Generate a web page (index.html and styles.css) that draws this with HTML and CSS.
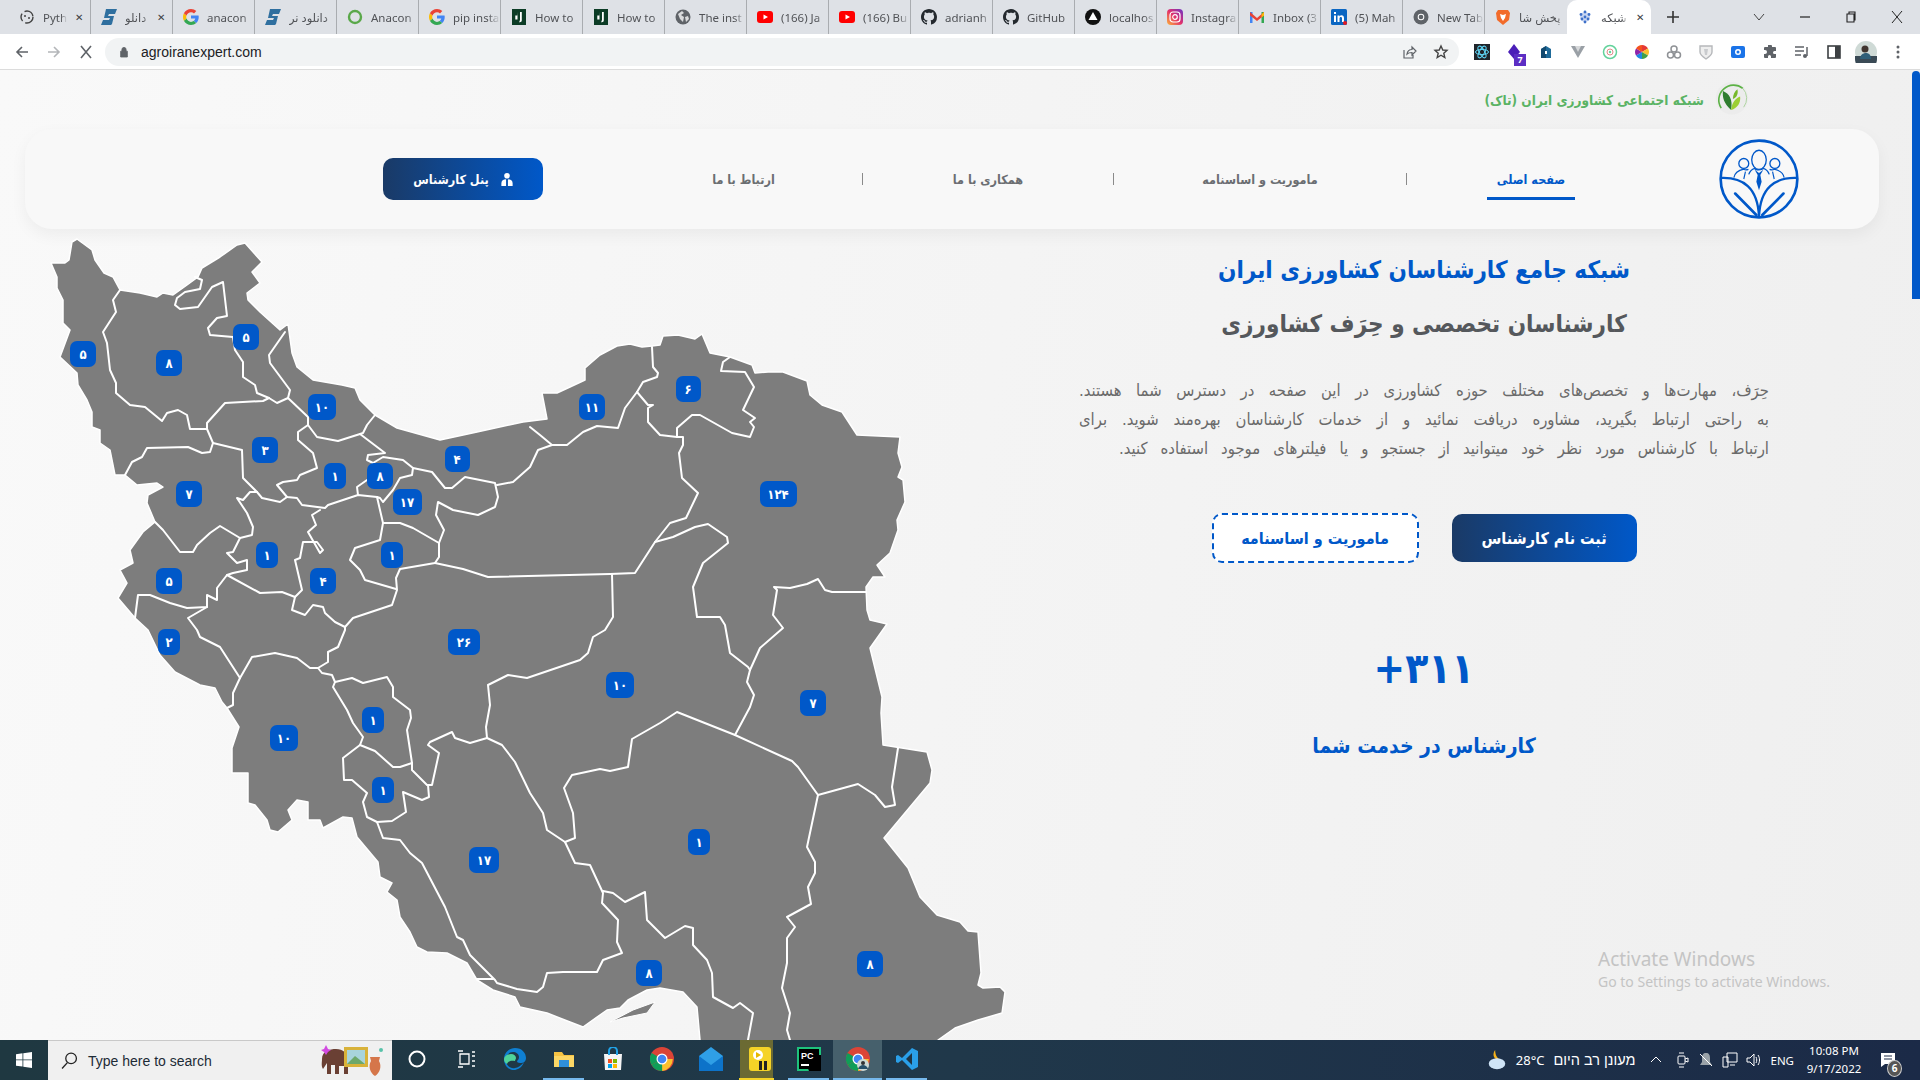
FILE: index.html
```html
<!DOCTYPE html>
<html lang="fa">
<head>
<meta charset="utf-8">
<title>agroiranexpert.com</title>
<link rel="stylesheet" href="styles.css">
</head>
<body>
<svg class="defs" width="0" height="0" aria-hidden="true">
  <symbol id="i-py" viewBox="0 0 16 16"><circle cx="8" cy="8" r="6" fill="none" stroke="#444" stroke-width="1.4" stroke-dasharray="11 3 8 3"/><circle cx="6" cy="7" r="1" fill="#444"/><circle cx="10" cy="9" r="1" fill="#444"/></symbol>
  <symbol id="i-s" viewBox="0 0 16 16"><path d="M5 0h11l-2 5H8L7 7h6l-2 8-1 1H0l2-5h6l1-2H3z" fill="#2f6f9f"/></symbol>
  <symbol id="i-g" viewBox="0 0 16 16"><path d="M15.7 8.2c0-.6 0-1.100-.2-1.600H8v3h4.300c-.2 1-.7 1.800-1.600 2.400l2.500 2c1.500-1.400 2.500-3.400 2.500-5.800z" fill="#4285f4"/><path d="M8 16c2.100 0 3.900-.7 5.200-1.900l-2.500-2c-.7.5-1.600.8-2.700.8-2.100 0-3.800-1.400-4.500-3.300L.9 11.700C2.200 14.300 4.900 16 8 16z" fill="#34a853"/><path d="M3.500 9.600C3.300 9.100 3.200 8.600 3.200 8s.1-1.100.3-1.600L.9 4.300C.3 5.400 0 6.700 0 8s.3 2.600.9 3.700z" fill="#fbbc05"/><path d="M8 3.200c1.200 0 2.200.4 3 1.200l2.300-2.300C11.900.8 10.100 0 8 0 4.900 0 2.200 1.700.9 4.300l2.600 2.100C4.200 4.500 5.900 3.200 8 3.200z" fill="#ea4335"/></symbol>
  <symbol id="i-o" viewBox="0 0 16 16"><circle cx="8" cy="8" r="6" fill="none" stroke="#5aa84a" stroke-width="2.400"/></symbol>
  <symbol id="i-dj" viewBox="0 0 16 16"><rect x="1" width="14" height="16" fill="#0c3c26"/><path d="M6.500 3v7.500H4.300V6.500h2zM9 3h1.800v8c0 1.500-.6 2-2.400 2.500v-1.500c.5-.2.600-.5.600-1z" fill="#fff"/></symbol>
  <symbol id="i-globe" viewBox="0 0 16 16"><circle cx="8" cy="8" r="7.500" fill="#5f6368"/><path d="M3 5l4-3 2 2-3 2 3 2-1 5-3-3zM10 8l3-1 1 3-3 3z" fill="#d9dadc"/></symbol>
  <symbol id="i-yt" viewBox="0 0 16 16"><rect y="2" width="16" height="12" rx="3" fill="#f00"/><path d="M6.500 5.500v5L11 8z" fill="#fff"/></symbol>
  <symbol id="i-gh" viewBox="0 0 16 16"><path fill="#24292e" d="M8 0C3.580 0 0 3.580 0 8c0 3.540 2.290 6.530 5.470 7.590.4.070.55-.17.55-.38 0-.19-.01-.82-.01-1.490-2.010.37-2.530-.49-2.690-.94-.09-.23-.48-.94-.82-1.130-.28-.15-.68-.52-.01-.53.63-.01 1.080.58 1.230.82.72 1.210 1.870.87 2.330.66.07-.52.28-.87.51-1.070-1.780-.2-3.640-.89-3.640-3.950 0-.87.31-1.590.82-2.150-.08-.2-.36-1.020.08-2.120 0 0 .67-.21 2.200.82.64-.18 1.320-.27 2-.27.68 0 1.360.09 2 .27 1.530-1.040 2.200-.82 2.200-.82.44 1.100.16 1.920.08 2.120.51.56.82 1.270.82 2.150 0 3.070-1.870 3.750-3.650 3.950.29.25.54.73.54 1.480 0 1.070-.01 1.930-.01 2.200 0 .21.15.46.55.38A8.013 8.013 0 0016 8c0-4.420-3.580-8-8-8z"/></symbol>
  <symbol id="i-lh" viewBox="0 0 16 16"><circle cx="8" cy="8" r="8" fill="#111"/><path d="M8 3l4.500 8h-9z" fill="#fff"/></symbol>
  <symbol id="i-ig" viewBox="0 0 16 16"><defs><linearGradient id="ig" x1="0" y1="1" x2="1" y2="0"><stop offset="0" stop-color="#fdb33a"/><stop offset=".5" stop-color="#e1306c"/><stop offset="1" stop-color="#6a35c9"/></linearGradient></defs><rect width="16" height="16" rx="4" fill="url(#ig)"/><rect x="3" y="3" width="10" height="10" rx="3" fill="none" stroke="#fff" stroke-width="1.200"/><circle cx="8" cy="8" r="2.300" fill="none" stroke="#fff" stroke-width="1.200"/></symbol>
  <symbol id="i-m" viewBox="0 0 16 16"><path d="M1 3h2.500v11H1z" fill="#4285f4"/><path d="M12.500 3H15v11h-2.500z" fill="#34a853"/><path d="M1 3l7 6 7-6v3.500L8 12 1 6.500z" fill="#ea4335"/><path d="M12.500 5.500L15 3v3.500l-2.500 2z" fill="#fbbc05"/></symbol>
  <symbol id="i-in" viewBox="0 0 16 16"><rect width="16" height="16" rx="1.500" fill="#0a66c2"/><path d="M3 6.500h2V13H3zM3 3h2v2H3zM6.500 6.500h2v1c.5-.8 1.200-1.200 2-1.200 1.700 0 2.500 1 2.500 2.900V13h-2V9.500c0-1-.4-1.500-1.200-1.500-.8 0-1.300.6-1.300 1.600V13h-2z" fill="#fff"/><circle cx="14" cy="14" r="2" fill="#e31b23"/></symbol>
  <symbol id="i-cg" viewBox="0 0 16 16"><circle cx="8" cy="8" r="7.500" fill="#5f6368"/><circle cx="8" cy="8" r="3.300" fill="#fff"/><circle cx="8" cy="8" r="2.300" fill="#5f6368"/></symbol>
  <symbol id="i-br" viewBox="0 0 16 16"><path d="M3 1h10l2 3-1 7-6 5-6-5-1-7z" fill="#f26b2a"/><path d="M5 5l3 1 3-1-1 4-2 3-2-3z" fill="#fff"/></symbol>
  <symbol id="i-net" viewBox="0 0 16 16"><circle cx="8" cy="8" r="5" fill="#c9d6f2"/><g fill="#3e70c9"><circle cx="8" cy="3" r="1.400"/><circle cx="4" cy="5.500" r="1.400"/><circle cx="12" cy="5.500" r="1.400"/><circle cx="5" cy="10" r="1.400"/><circle cx="11" cy="10" r="1.400"/><circle cx="8" cy="8" r="1.400"/><circle cx="8" cy="13" r="1.400"/></g></symbol>
  <symbol id="i-chrome" viewBox="0 0 24 24"><circle cx="12" cy="12" r="12" fill="#db4437"/><path d="M12 12L1.600 18A12 12 0 0 1 1.600 6z" fill="#0f9d58"/><path d="M1.600 18L12 12l6 0-5.800 12A12 12 0 0 1 1.600 18z" fill="#0f9d58"/><path d="M12 12h10.800a12 12 0 0 1-10.600 12z" fill="#fbc02d"/><circle cx="12" cy="12" r="5.500" fill="#fff"/><circle cx="12" cy="12" r="4.300" fill="#4285f4"/></symbol>
</svg>

<header class="chrome">
  <div class="tabs">
    <div class="tab"><svg class="fav"><use href="#i-py"/></svg><span class="tt">Pyth</span><span class="tx">✕</span></div>
    <div class="tab"><svg class="fav"><use href="#i-s"/></svg><span class="tt">دانلو</span><span class="tx">✕</span></div>
    <div class="tab"><svg class="fav"><use href="#i-g"/></svg><span class="tt">anacon</span></div>
    <div class="tab"><svg class="fav"><use href="#i-s"/></svg><span class="tt">دانلود نر</span></div>
    <div class="tab"><svg class="fav"><use href="#i-o"/></svg><span class="tt">Anacon</span></div>
    <div class="tab"><svg class="fav"><use href="#i-g"/></svg><span class="tt">pip insta</span></div>
    <div class="tab"><svg class="fav"><use href="#i-dj"/></svg><span class="tt">How to</span></div>
    <div class="tab"><svg class="fav"><use href="#i-dj"/></svg><span class="tt">How to</span></div>
    <div class="tab"><svg class="fav"><use href="#i-globe"/></svg><span class="tt">The inst</span></div>
    <div class="tab"><svg class="fav"><use href="#i-yt"/></svg><span class="tt">(166) Ja</span></div>
    <div class="tab"><svg class="fav"><use href="#i-yt"/></svg><span class="tt">(166) Bu</span></div>
    <div class="tab"><svg class="fav"><use href="#i-gh"/></svg><span class="tt">adrianh</span></div>
    <div class="tab"><svg class="fav"><use href="#i-gh"/></svg><span class="tt">GitHub</span></div>
    <div class="tab"><svg class="fav"><use href="#i-lh"/></svg><span class="tt">localhos</span></div>
    <div class="tab"><svg class="fav"><use href="#i-ig"/></svg><span class="tt">Instagra</span></div>
    <div class="tab"><svg class="fav"><use href="#i-m"/></svg><span class="tt">Inbox (3</span></div>
    <div class="tab"><svg class="fav"><use href="#i-in"/></svg><span class="tt">(5) Mah</span></div>
    <div class="tab"><svg class="fav"><use href="#i-cg"/></svg><span class="tt">New Tab</span></div>
    <div class="tab tab-last"><svg class="fav"><use href="#i-br"/></svg><span class="tt">پخش شا</span></div>
    <div class="tab tab-active"><svg class="fav"><use href="#i-net"/></svg><span class="tt">شبکه</span><span class="tx">✕</span></div>
    <svg class="newtab" viewBox="0 0 14 14"><path d="M7 1v12M1 7h12" stroke="#333" stroke-width="1.600"/></svg>
    <div class="winctl">
      <svg class="wc" viewBox="0 0 14 14"><path d="M2 4l5 6 5-6" fill="none" stroke="#444" stroke-width="1"/></svg>
      <svg class="wc" viewBox="0 0 14 14"><path d="M2 7h10" stroke="#222" stroke-width="1.200"/></svg>
      <svg class="wc" viewBox="0 0 14 14"><path d="M3 4h7v8H3zM5 4V2h6v8h-1" fill="none" stroke="#222" stroke-width="1.100"/></svg>
      <svg class="wc" viewBox="0 0 14 14"><path d="M2 1l10 12M12 1L2 13" fill="none" stroke="#222" stroke-width="1"/></svg>
    </div>
  </div>
  <div class="toolbar">
    <svg class="tb" viewBox="0 0 16 16"><path d="M14 8H3M8 3L3 8l5 5" fill="none" stroke="#5f6368" stroke-width="1.600"/></svg>
    <svg class="tb" viewBox="0 0 16 16"><path d="M2 8h11M8 3l5 5-5 5" fill="none" stroke="#b4b6b9" stroke-width="1.600"/></svg>
    <svg class="tb" viewBox="0 0 16 16"><path d="M3 2l10 12M13 2L3 14" fill="none" stroke="#5f6368" stroke-width="1.600"/></svg>
    <div class="omni">
      <svg class="lock" viewBox="0 0 12 14"><path d="M2 6h8v7H2zM3.500 6V4a2.500 2.500 0 0 1 5 0v2" fill="#5f6368" stroke="#5f6368"/></svg>
      <span class="url">agroiranexpert.com</span>
      <svg class="omni-ic" viewBox="0 0 16 16"><path d="M3 6v8h9v-3M6 10c.5-3 3-4.500 5-4.500V3l4 4-4 4V8.500c-2 0-4 .5-5 1.500z" fill="none" stroke="#5f6368" stroke-width="1.200"/></svg>
      <svg class="omni-ic" viewBox="0 0 16 16"><path d="M8 2l1.800 4 4.200.4-3.200 2.800 1 4.300L8 11.200l-3.800 2.300 1-4.300L2 6.400 6.200 6z" fill="none" stroke="#444" stroke-width="1.400"/></svg>
    </div>
    <div class="exts">
      <svg class="ex" viewBox="0 0 16 16"><rect width="16" height="16" fill="#20252b"/><g fill="none" stroke="#61dafb"><ellipse cx="8" cy="8" rx="6.500" ry="2.600"/><ellipse cx="8" cy="8" rx="6.500" ry="2.600" transform="rotate(60 8 8)"/><ellipse cx="8" cy="8" rx="6.500" ry="2.600" transform="rotate(120 8 8)"/></g></svg>
      <div class="ex ex-badge"><svg class="ex" viewBox="0 0 16 16"><path d="M8 0l6 8-6 7-6-7z" fill="#4a1fb8"/></svg><span class="bdg">7</span></div>
      <svg class="ex" viewBox="0 0 16 16"><path d="M3 5l5-3 5 3v9H3z" fill="#1f6a99"/><path d="M3 5l5-3v12H3z" fill="#134a70"/><rect x="7" y="7" width="2" height="3" fill="#fff"/></svg>
      <svg class="ex" viewBox="0 0 16 16"><path d="M1 2h14L8 14z" fill="#9aa0a6"/><path d="M5 2h6L8 8z" fill="#d6d8da"/></svg>
      <svg class="ex" viewBox="0 0 16 16"><circle cx="8" cy="8" r="6.500" fill="none" stroke="#63d29b" stroke-width="1.500"/><circle cx="8" cy="8" r="3" fill="none" stroke="#e28a8a"/><circle cx="8" cy="8" r="1.200" fill="#63d29b"/></svg>
      <svg class="ex" viewBox="0 0 16 16"><path d="M8 8V1a7 7 0 0 1 6 3.500z" fill="#e53935"/><path d="M8 8l6-3.500A7 7 0 0 1 14 11.500z" fill="#fbc02d"/><path d="M8 8l6 3.500A7 7 0 0 1 8 15z" fill="#43a047"/><path d="M8 8v7a7 7 0 0 1-6-3.500z" fill="#1e88e5"/><path d="M8 8L2 11.500a7 7 0 0 1 0-7z" fill="#8e24aa"/><path d="M8 8L2 4.500A7 7 0 0 1 8 1z" fill="#f4511e"/></svg>
      <svg class="ex" viewBox="0 0 16 16"><g fill="none" stroke="#8f9296" stroke-width="1.500"><circle cx="8" cy="5" r="3"/><circle cx="4.500" cy="11" r="3"/><circle cx="11.500" cy="11" r="3"/></g></svg>
      <svg class="ex" viewBox="0 0 16 16"><path d="M2 2h12v6c0 3-3 5-6 7-3-2-6-4-6-7z" fill="#eee" stroke="#b6b8bb" stroke-width="1.400"/><path d="M6 5h4l-1 6H7z" fill="#c9cbce"/></svg>
      <svg class="ex" viewBox="0 0 16 16"><rect x="1" y="2" width="14" height="12" rx="2" fill="#1a73e8"/><circle cx="8" cy="8" r="3" fill="#fff"/><circle cx="8" cy="8" r="1.500" fill="#1a73e8"/></svg>
      <svg class="ex" viewBox="0 0 16 16"><path d="M6 2h3a1 1 0 0 1 1 1v1h3a1 1 0 0 1 1 1v3h-1.500a1.500 1.500 0 0 0 0 3H14v3a1 1 0 0 1-1 1H9v-1.500a1.500 1.500 0 0 0-3 0V15H3a1 1 0 0 1-1-1v-3h1a2 2 0 0 0 0-4H2V5a1 1 0 0 1 1-1h3V3z" transform="translate(0 -1)" fill="#5f6368"/></svg>
      <svg class="ex" viewBox="0 0 16 16"><path d="M1 3h9M1 7h9M1 11h6" stroke="#5f6368" stroke-width="1.600"/><path d="M13 3v9" stroke="#5f6368" stroke-width="1.500"/><circle cx="11" cy="12" r="2" fill="#5f6368"/></svg>
      <svg class="ex" viewBox="0 0 16 16"><rect x="2" y="2" width="12" height="12" fill="none" stroke="#3c4043" stroke-width="1.600"/><rect x="9" y="2" width="5" height="12" fill="#3c4043"/></svg>
      <svg class="ex ex-avatar" viewBox="0 0 22 22"><circle cx="11" cy="11" r="11" fill="#cfdad6"/><path d="M0 15h22v3a11 11 0 0 1-22 0z" fill="#3a4a55"/><circle cx="10" cy="8" r="3.500" fill="#40352f"/><path d="M5 18c0-4 3-6 6-6s5 2 5 6z" fill="#2f5f78"/></svg>
      <svg class="ex" viewBox="0 0 16 16"><g fill="#5f6368"><circle cx="8" cy="3" r="1.500"/><circle cx="8" cy="8" r="1.500"/><circle cx="8" cy="13" r="1.500"/></g></svg>
    </div>
  </div>
</header>

<main class="page" dir="rtl">
  <div class="topline">
    <svg class="leaf" viewBox="0 0 40 44">
      <circle cx="20" cy="20" r="18" fill="#ececec"/>
      <path d="M8 31A16.500 16.500 0 0 1 32 9" fill="none" stroke="#5cb246" stroke-width="1.800"/>
      <path d="M32 9a16.500 16.500 0 0 1 1 21" fill="none" stroke="#a7d197" stroke-width="1"/>
      <path d="M19 33C11 26 9 19 10 12c7 3 11 9 9 21z" fill="#2f7d2f"/>
      <path d="M19 33c1-9 5-13 10-15 1 7-3 13-10 15z" fill="#9ccf34"/>
      <path d="M21 21c0-5 2-9 5-11 1 4 0 9-5 11z" fill="#76b82a"/>
    </svg>
    <span class="brand">شبکه اجتماعی کشاورزی ایران (تاک)</span>
  </div>

  <nav class="navcard">
    <svg class="logo" viewBox="955 205 242 242">
      <g fill="none" stroke="#0058c9">
        <circle cx="1076" cy="326" r="116" stroke-width="8"/>
        <path d="M958 323c70-4 115 30 118 118M1194 323c-70-4-115 30-118 118" stroke-width="7"/>
        <path d="M1004 370l64 65M1150 370l-64 65" stroke-width="8" stroke-linecap="round"/>
        <ellipse cx="1076" cy="268" rx="22" ry="29" stroke-width="4"/>
        <circle cx="1030" cy="279" r="15" stroke-width="4"/>
        <circle cx="1124" cy="279" r="15" stroke-width="4"/>
        <path d="M1000 322c2-14 12-22 30-26 4 4 6 4 14 1M1152 322c-2-14-12-22-30-26-4 4-6 4-14 1M1030 326l5-22M1122 326l-5-22" stroke-width="3.500"/>
        <path d="M1045 312c4-12 12-16 18-18 3 6 22 6 26 0 6 2 14 6 18 18" stroke-width="4"/>
      </g>
      <path d="M1063 298l13 10 13-10-9 16 4 20-8 26-8-26 4-20z" fill="#0058c9"/>
    </svg>
    <div class="menu">
      <a class="mi mi-home">صفحه اصلی</a>
      <span class="sep sep-first"></span>
      <a class="mi mi-about">ماموریت و اساسنامه</a>
      <span class="sep"></span>
      <a class="mi mi-coop">همکاری با ما</a>
      <span class="sep"></span>
      <a class="mi mi-contact">ارتباط با ما</a>
    </div>
    <a class="panelbtn">
      <svg class="uicon" viewBox="0 0 12 16"><circle cx="6" cy="4" r="3" fill="#fff"/><path d="M0 15v-3c0-3 2-4 5-4.300V15zM7 15V7.700c3 .3 5 1.300 5 4.300v3z" fill="#fff"/></svg>
      <span>پنل کارشناس</span>
    </a>
  </nav>

  <section class="hero">
    <div class="intro">
      <h1 class="t1">شبکه جامع کارشناسان کشاورزی ایران</h1>
      <h2 class="t2">کارشناسان تخصصی و حِرَف کشاورزی</h2>
      <p class="lead">
        <span class="ln">حِرَف، مهارت‌ها و تخصص‌های مختلف حوزه کشاورزی در این صفحه در دسترس شما هستند.</span>
        <span class="ln">به راحتی ارتباط بگیرید، مشاوره دریافت نمائید و از خدمات کارشناسان بهره‌مند شوید. برای</span>
        <span class="ln ln-end">ارتباط با کارشناس مورد نظر خود میتوانید از جستجو و یا فیلترهای موجود استفاده کنید.</span>
      </p>
      <div class="actions">
        <a class="btn btn-fill">ثبت نام کارشناس</a>
        <a class="btn btn-dash">ماموریت و اساسنامه</a>
      </div>
      <div class="count" dir="ltr">+۳۱۱</div>
      <div class="countlabel">کارشناس در خدمت شما</div>
    </div>

    <svg class="map" viewBox="30 229 1000 811" dir="ltr">
      <polygon class="land" points="51,263 65,263 69,260 72,242 77,239 92,250 95,260 104,273 113,277 120,290 140,293 157,297 163,293 173,295 187,285 198,277 202,268 220,257 237,245 245,243 262,262 252,272 260,283 247,293 248,300 260,312 280,330 288,324 292,353 297,367 313,380 342,385 355,388 360,400 375,415 397,428 440,440 477,432 523,422 547,419 542,393 557,393 570,387 585,380 585,368 600,355 617,346 630,344 642,347 652,346 660,345 663,336 678,335 695,339 702,334 710,353 730,357 752,365 755,373 768,372 783,372 807,381 810,395 822,405 842,412 857,435 900,437 898,453 902,467 898,477 903,480 905,502 897,520 898,530 890,553 877,565 885,577 873,577 866,587 867,610 870,620 887,624 870,648 882,697 881,713 883,745 927,752 932,770 930,783 884,838 908,868 920,897 937,915 960,922 968,931 978,932 981,973 978,985 983,988 1000,987 1005,992 1002,1013 978,1020 955,1028 938,1040 938,1060 700,1060 700,1040 697,1007 683,992 660,988 647,990 628,1000 620,1008 607,1010 583,1027 570,1022 547,1013 520,1007 515,997 493,990 477,980 467,963 447,953 427,952 417,947 410,932 400,917 397,900 387,892 392,883 380,877 378,862 357,837 352,818 343,817 323,828 320,820 308,820 308,802 297,800 288,810 292,820 278,832 270,830 267,820 255,805 248,803 248,773 232,773 232,748 239,727 227,708 222,702 215,688 200,685 175,672 160,655 148,630 135,618 118,598 127,583 120,570 133,563 130,550 143,532 155,522 147,503 148,495 163,487 157,483 137,485 125,475 115,475 110,450 100,443 100,430 92,427 92,412 87,400 78,385 77,373 60,357 70,330 63,323 63,300 57,288 57,277"/>
      <polygon class="isle" points="610,1022 633,1010 655,1002 647,1013 623,1018"/>
      <g class="lines">
        <polyline points="120,290 113,300 116,312 103,332 107,343 110,370 116,383 116,393 130,405 145,407 162,421 167,413 178,410 187,415 190,429 207,429 213,443 210,452 202,453 188,447 147,448 142,457 132,462 125,475"/>
        <polyline points="207,429 207,423 225,403 263,401 269,398 277,403 288,398 308,417 308,425"/>
        <polyline points="288,398 290,390 270,363 269,355 285,332"/>
        <polyline points="269,398 257,393 255,385 243,377 243,362 235,350 233,337 210,335 208,328 217,318 227,316 223,282 212,287 198,307 180,309 175,305 177,298 185,292 200,289 202,280 195,277"/>
        <polyline points="375,415 367,425 363,433 360,434 338,441 317,437 308,425 298,432 298,440 313,453 317,468 300,475 297,480 283,482 277,485 287,497 297,498 302,505 325,508 328,505 358,495 377,497"/>
        <polyline points="360,434 385,453 368,455 367,460 373,463 383,457 403,460 413,468 432,472 445,488 452,488 465,477 495,483 498,497 495,507 478,515 453,510 438,502 436,515 444,530 439,543 439,557 435,563 400,569 396,578 397,590 392,605 377,610 353,618 345,627"/>
        <polyline points="413,468 412,475 400,478 393,490 383,502 380,498 377,497 383,523 380,540 355,548 350,560 360,570 365,580 396,589"/>
        <polyline points="383,523 400,523 413,528 439,543"/>
        <polyline points="435,563 463,569 488,577 610,574"/>
        <polyline points="358,495 357,487 367,480"/>
        <polyline points="497,485 513,482 530,467 538,450 552,445"/>
        <polyline points="530,427 540,435 552,445 567,445 583,432 597,426 618,428 625,408 637,392 648,405 653,405 648,408 648,422 660,435 677,437 683,437 683,445 679,453 682,478 698,493 686,518 670,523 655,542 635,573 610,574"/>
        <polyline points="652,347 653,367 658,373 657,377 643,382 637,392"/>
        <polyline points="213,443 242,450 243,478 257,492 262,498 280,502 287,497"/>
        <polyline points="257,492 250,492 243,500 237,498 247,513 253,527 252,535 240,538 230,532 220,526 210,533 197,545 193,552 180,552 163,530 155,522"/>
        <polyline points="240,538 233,552 227,553 237,563 247,560 247,570 233,573 227,575 217,588 217,600 207,595 207,607 187,608 170,603 150,595 138,595 135,618"/>
        <polyline points="227,575 260,593 282,592 295,597 302,590 295,560 300,558 303,542 317,542 323,550 320,553 308,532 316,525 312,515 320,510"/>
        <polyline points="295,597 292,610 305,615 313,605 323,607 325,613 335,622 345,627 345,630 338,647 328,652 328,662 318,668 310,668 297,658 275,653 252,657 240,678 233,693 233,705 227,708"/>
        <polyline points="207,607 188,618 197,630 200,637 220,647 240,678"/>
        <polyline points="318,668 322,673 332,675 335,682 333,687 347,710 353,723 363,737 360,745 343,758 344,780 352,780 367,793 363,802 367,817 377,822"/>
        <polyline points="335,682 352,678 363,683 387,677 393,687 393,697 410,710 411,718 407,730 412,763 412,770 427,785 432,785 439,753 428,745 430,742 452,732 455,738 470,743 487,738 486,727 490,705 488,685 508,675 527,678 580,660 588,653 593,637 605,630 613,617 612,574"/>
        <polyline points="360,745 375,751 393,767 400,767 412,763"/>
        <polyline points="428,785 429,797 422,800 403,792 406,812 392,821 377,822 383,838 400,840 410,853 422,863 445,907 457,937 463,940 470,955 495,980 497,983 517,989 537,992 543,987 547,973 563,972 597,972 603,960 622,953 617,942 618,920 602,903 603,893 590,865 575,863 565,842 547,830 543,813 530,793 515,762 502,745 487,738"/>
        <polyline points="477,979 493,979"/>
        <polyline points="565,842 575,838 573,813 564,788 572,775 600,769 610,771 628,767 632,739 660,723 677,712 735,735 792,761 798,767 818,795 858,784 875,795 885,807 895,805 892,787 898,748"/>
        <polyline points="603,891 613,893 625,902 645,892 647,920 665,938 685,926 693,928 693,945 707,960 712,973 713,997 733,1008 740,1003 753,1013 748,1040"/>
        <polyline points="655,542 673,537 695,527 708,524 727,537 728,543 703,563 693,587 697,617 720,617 725,625 730,653 748,667 750,670 747,682 754,695 750,707 735,735"/>
        <polyline points="750,670 760,648 783,628 773,615 777,590 774,587 790,588 807,584 818,579 825,590 832,592 866,592"/>
        <polyline points="677,437 677,428 692,415 700,415 732,433 750,437 754,427 750,422 755,418 743,410 754,387 745,372 721,371 723,362 730,357"/>
        <polyline points="818,795 807,847 815,862 815,873 808,887 811,904 787,917 795,927 787,938 787,963 782,988 790,1013 787,1030 790,1040"/>
      </g>
      <g class="pins">
        <rect x="70" y="341" width="26" height="26" rx="7"/><text x="83" y="359">۵</text>
        <rect x="156" y="350" width="26" height="26" rx="7"/><text x="169" y="368">۸</text>
        <rect x="233" y="324" width="26" height="26" rx="7"/><text x="246" y="342">۵</text>
        <rect x="308" y="394" width="28" height="26" rx="7"/><text x="322" y="412">۱۰</text>
        <rect x="252" y="437" width="26" height="26" rx="7"/><text x="265" y="455">۳</text>
        <rect x="324" y="463" width="22" height="26" rx="7"/><text x="335" y="481">۱</text>
        <rect x="367" y="463" width="26" height="26" rx="7"/><text x="380" y="481">۸</text>
        <rect x="393" y="489" width="29" height="26" rx="7"/><text x="407" y="507">۱۷</text>
        <rect x="445" y="446" width="25" height="26" rx="7"/><text x="457" y="464">۴</text>
        <rect x="176" y="481" width="26" height="26" rx="7"/><text x="189" y="499">۷</text>
        <rect x="256" y="542" width="22" height="26" rx="7"/><text x="267" y="560">۱</text>
        <rect x="381" y="542" width="22" height="26" rx="7"/><text x="392" y="560">۱</text>
        <rect x="156" y="568" width="26" height="26" rx="7"/><text x="169" y="586">۵</text>
        <rect x="310" y="568" width="26" height="26" rx="7"/><text x="323" y="586">۴</text>
        <rect x="579" y="394" width="26" height="26" rx="7"/><text x="592" y="412">۱۱</text>
        <rect x="676" y="376" width="25" height="26" rx="7"/><text x="688" y="394">۶</text>
        <rect x="760" y="481" width="37" height="26" rx="7"/><text x="778" y="499">۱۲۴</text>
        <rect x="606" y="672" width="28" height="26" rx="7"/><text x="620" y="690">۱۰</text>
        <rect x="800" y="690" width="26" height="26" rx="7"/><text x="813" y="708">۷</text>
        <rect x="448" y="629" width="32" height="26" rx="7"/><text x="464" y="647">۲۶</text>
        <rect x="270" y="725" width="28" height="26" rx="7"/><text x="284" y="743">۱۰</text>
        <rect x="362" y="707" width="22" height="26" rx="7"/><text x="373" y="725">۱</text>
        <rect x="372" y="777" width="22" height="26" rx="7"/><text x="383" y="795">۱</text>
        <rect x="469" y="847" width="30" height="26" rx="7"/><text x="484" y="865">۱۷</text>
        <rect x="636" y="960" width="26" height="26" rx="7"/><text x="649" y="978">۸</text>
        <rect x="688" y="829" width="22" height="26" rx="7"/><text x="699" y="847">۱</text>
        <rect x="857" y="951" width="26" height="26" rx="7"/><text x="870" y="969">۸</text>
        <rect x="158" y="629" width="22" height="26" rx="7"/><text x="169" y="647">۲</text>
      </g>
    </svg>
  </section>

  <div class="scrollthumb"></div>
  <div class="activate" dir="ltr">
    <div class="act1">Activate Windows</div>
    <div class="act2">Go to Settings to activate Windows.</div>
  </div>
</main>

<footer class="taskbar">
  <div class="tb-start"><svg class="winlogo" viewBox="0 0 16 16"><path d="M0 2.200L6.500 1.300V7.500H0zM7.300 1.200L16 0v7.500H7.300zM0 8.300h6.500v6.300L0 13.800zM7.300 8.300H16V16l-8.700-1.200z" fill="#fff"/></svg></div>
  <div class="tb-search">
    <svg class="mag" viewBox="0 0 16 16"><circle cx="9.500" cy="6" r="5" fill="none" stroke="#222" stroke-width="1.200"/><path d="M6 10l-5 5.500" stroke="#222" stroke-width="1.300"/></svg>
    <span class="tb-ph">Type here to search</span>
    <svg class="doodle" viewBox="0 0 66 32"><path d="M2 14c0-8 8-10 14-10 7 0 12 4 12 11v14h-4v-8h-5v8h-4v-9h-4v9H7V18l-4 6c-2-3-1-7-1-10z" fill="#6a4034"/><rect x="24" y="2" width="24" height="20" fill="#d8b23a"/><rect x="27" y="5" width="18" height="14" fill="#a8d4dc"/><path d="M27 19l8-8 10 8z" fill="#6da86a"/><path d="M50 12h10l-1 4c3 5 1 12-4 15-5-3-7-10-4-15z" fill="#d5764a"/><path d="M4 4l2-4 2 4 3 1-3 2-2 3-2-3-3-2z" fill="#d14ae0"/><circle cx="61" cy="5" r="2" fill="#58c2a9"/></svg>
  </div>
  <div class="ti"><svg class="ti-ic" viewBox="0 0 24 24"><circle cx="12" cy="12" r="7.500" fill="none" stroke="#fff" stroke-width="2"/></svg></div>
  <div class="ti"><svg class="ti-ic" viewBox="0 0 24 24"><path d="M6 7h9v10H6zM4 4h5M4 20h5M18 5h3M18 9h3M18 14h3M18 19h3" fill="none" stroke="#fff" stroke-width="1.300"/></svg></div>
  <div class="ti"><svg class="ti-ic" viewBox="0 0 24 24"><path d="M21 15c-2 6-7 8-10 8-6 0-10-5-10-11S6 1 12 1c7 0 11 5 11 10 0 3-2 5-6 5-2 0-3-1-3-2 1-1 2-2 2-4 0-3-3-5-6-5-5 0-8 5-7 9 .5 5 5 8 9 7 3-.5 6-2 9-6z" fill="#0f7fd1"/><path d="M1 12c1-4 5-5 7-5 3 0 5 2 5 4 0 1-1 2-1 3-4-1-7 0-8 3-2-1-3-3-3-5z" fill="#4fd39a"/></svg></div>
  <div class="ti ti-on"><svg class="ti-ic" viewBox="0 0 24 24"><path d="M2 5h8l2 3h10v3H2z" fill="#f6c344"/><path d="M2 9h20v11H2z" fill="#fcd766"/><rect x="7" y="13" width="10" height="7" fill="#2f8fdb"/></svg></div>
  <div class="ti"><svg class="ti-ic" viewBox="0 0 24 24"><path d="M3 7h18l-1 16H4z" fill="#f5f5f5"/><path d="M8 8V4a4 4 0 0 1 8 0v4" fill="none" stroke="#21a3e8" stroke-width="2"/><rect x="7" y="12" width="4" height="4" fill="#f25022"/><rect x="12" y="12" width="4" height="4" fill="#7fba00"/><rect x="7" y="17" width="4" height="4" fill="#00a4ef"/><rect x="12" y="17" width="4" height="4" fill="#ffb900"/></svg></div>
  <div class="ti"><svg class="ti-ic" viewBox="0 0 24 24"><use href="#i-chrome"/></svg></div>
  <div class="ti"><svg class="ti-ic" viewBox="0 0 24 24"><path d="M0 9L12 0l12 9v15H0z" fill="#2f9fe6"/><path d="M0 9l12 9 12-9v15H0z" fill="#0d73c9"/></svg></div>
  <div class="ti ti-plex"><svg class="ti-ic" viewBox="0 0 24 24"><rect x="1" y="0" width="22" height="24" rx="3" fill="#f5d327"/><circle cx="10" cy="8" r="5" fill="#fff"/><path d="M8 5v6l5-3z" fill="#e6b800"/><rect x="11" y="14" width="3" height="9" fill="#222"/><rect x="16" y="14" width="3" height="9" fill="#222"/></svg></div>
  <div class="ti ti-on"><svg class="ti-ic" viewBox="0 0 24 24"><rect width="24" height="24" fill="#000"/><path d="M0 0h24v8H12L8 14l4 10H0z" fill="#21d789" opacity=".9"/><rect x="2" y="2" width="20" height="20" fill="#000"/><text class="pc" x="4" y="12">PC</text><rect x="4" y="17" width="8" height="2" fill="#fff"/></svg></div>
  <div class="ti ti-active"><svg class="ti-ic" viewBox="0 0 24 24"><use href="#i-chrome"/><circle cx="17" cy="18" r="6" fill="#ccd8d4"/><circle cx="17" cy="16" r="2" fill="#333"/><path d="M12 22c1-3 3-4 5-4s4 1 5 4z" fill="#27506a"/></svg></div>
  <div class="ti ti-on"><svg class="ti-ic" viewBox="0 0 24 24"><path d="M17 1l6 3v16l-6 3L7 13l-4 3-2-1V9l2-1 4 3z" fill="#2a9fe8"/><path d="M17 6l-6 6 6 6z" fill="#1f3443"/></svg></div>
  <div class="tray" dir="ltr">
    <svg class="wx" viewBox="0 0 24 24"><path d="M10 1c-3 4-2 8 1 10 2 1 3 1 4 0-3-1-5-5-5-10z" fill="#f6b21b"/><ellipse cx="12" cy="16" rx="9" ry="6" fill="#cfe4f7"/></svg>
    <span class="wx-t">28°C</span>
    <span class="wx-h" dir="rtl">מעונן רב היום</span>
    <svg class="tr-chev" viewBox="0 0 12 12"><path d="M1 8l5-5 5 5" fill="none" stroke="#fff" stroke-width="1"/></svg>
    <svg class="tr-ic" viewBox="0 0 16 16"><rect x="4" y="4" width="7" height="8" rx="1" fill="none" stroke="#fff"/><path d="M11 7l3-1v4l-3-1M5 1h5M5 15h5" fill="none" stroke="#fff"/></svg>
    <svg class="tr-ic" viewBox="0 0 16 16"><path d="M8 1c3 0 4 2 4 5v4l2 3H2l2-3V6c0-3 1-5 4-5z" fill="#9aa2a8"/><path d="M2 2l12 12" stroke="#fff"/></svg>
    <svg class="tr-ic" viewBox="0 0 16 16"><path d="M5 1h10v9H5zM1 5h5v10H1zM8 13h5" fill="none" stroke="#fff"/></svg>
    <svg class="tr-ic" viewBox="0 0 16 16"><path d="M1 6h3l4-4v12l-4-4H1zM10 5c1 2 1 4 0 6M12 3c2 3 2 7 0 10" fill="none" stroke="#fff"/></svg>
    <span class="tr-lang">ENG</span>
    <div class="clock"><span>10:08 PM</span><span>9/17/2022</span></div>
    <div class="notif"><svg class="tr-ic" viewBox="0 0 16 16"><path d="M1 1h14v11H5l-4 3z" fill="#fff"/><path d="M4 4h8M4 7h8" stroke="#1c2b47"/></svg><span class="nbadge">6</span></div>
  </div>
</footer>
</body>
</html>
```
FILE: styles.css
```css
* { box-sizing: border-box; }
html, body { margin: 0; height: 100%; }
body {
  width: 1920px;
  height: 1080px;
  overflow: hidden;
  display: flex;
  flex-direction: column;
  font-family: "DejaVu Sans", sans-serif;
  background: #f5f5f5;
}
.defs { position: absolute; }

/* browser chrome */
.chrome { flex: none; font-family: "Noto Sans", "DejaVu Sans", sans-serif; }
.tabs {
  height: 34px;
  background: #dee1e6;
  display: flex;
  align-items: center;
  padding-left: 9px;
}
.tab {
  width: 82px;
  height: 34px;
  flex: none;
  display: flex;
  align-items: center;
  padding: 0 0 0 10px;
  gap: 8px;
  position: relative;
  border-right: 1px solid #a9acb0;
}
.tab-last { border-right: none; }
.tab-active {
  background: #fff;
  border: none;
  border-radius: 10px 10px 0 0;
  padding-left: 10px;
  width: 84px;
}
.fav { width: 16px; height: 16px; flex: none; }
.tt {
  flex: 1;
  min-width: 0;
  overflow: hidden;
  white-space: nowrap;
  font-size: 11.500px;
  color: #505256;
  -webkit-mask-image: linear-gradient(90deg, #000 75%, transparent);
  mask-image: linear-gradient(90deg, #000 75%, transparent);
}
.tx { flex: none; font-size: 10px; color: #3c4043; width: 15px; font-family: "DejaVu Sans", sans-serif; }
.newtab { width: 14px; height: 14px; margin-left: 15px; flex: none; }
.winctl { margin-left: auto; display: flex; padding-right: 16px; gap: 32px; }
.wc { width: 14px; height: 14px; flex: none; }

.toolbar {
  height: 36px;
  background: #fff;
  display: flex;
  align-items: center;
  padding-left: 14px;
  border-bottom: 1px solid #dcdcdc;
}
.tb { width: 16px; height: 16px; flex: none; margin-right: 16px; }
.omni {
  width: 1354px;
  height: 28px;
  margin-left: -5px;
  background: #f1f3f4;
  border-radius: 14px;
  display: flex;
  align-items: center;
  padding: 0 10px 0 14px;
}
.lock { width: 10px; height: 12px; flex: none; }
.url { font-size: 14px; color: #202124; margin-left: 12px; flex: 1; font-family: "Liberation Sans", sans-serif; }
.omni-ic { width: 16px; height: 16px; margin-left: 16px; flex: none; }
.exts { display: flex; align-items: center; gap: 16px; margin-left: 15px; }
.ex { width: 16px; height: 16px; flex: none; display: block; }
.ex-avatar { width: 22px; height: 22px; margin: 0 -3px; }
.ex-badge { position: relative; }
.bdg {
  position: absolute;
  left: 8px;
  top: 10px;
  width: 12px;
  height: 12px;
  background: #5c2ec4;
  color: #fff;
  font-size: 9px;
  line-height: 12px;
  text-align: center;
  font-weight: 700;
}

/* page */
.page {
  flex: 1;
  min-height: 0;
  position: relative;
  overflow: hidden;
  font-stretch: condensed;
  background: linear-gradient(100deg, #f9f9f9 0%, #f5f5f5 40%, #efefef 100%);
}
.topline {
  height: 59px;
  display: flex;
  align-items: center;
  gap: 10px;
  padding-right: 170px;
}
.leaf { width: 36px; height: 40px; flex: none; }
.brand { font-size: 13.500px; font-weight: 700; color: #5ab364; white-space: nowrap; }
.navcard {
  height: 100px;
  margin: 0 41px 0 25px;
  background: #f8f8f8;
  border-radius: 27px;
  box-shadow: 0 6px 16px rgba(0, 0, 0, .05);
  display: flex;
  align-items: center;
  padding-right: 80px;
}
.logo { width: 80px; height: 80px; flex: none; margin-left: 144px; }
.menu { display: flex; align-items: center; }
.mi {
  height: 42px;
  display: flex;
  align-items: center;
  justify-content: center;
  white-space: nowrap;
  font-size: 12.500px;
  font-weight: 700;
  color: #6b6e72;
}
.mi-home { width: 88px; color: #0058c9; border-bottom: 3px solid #0058c9; padding-top: 3px; }
.mi-about { width: 112px; }
.mi-coop { width: 70px; }
.mi-contact { width: 57px; }
.sep { width: 1px; height: 12px; background: #8a8a8a; margin: 0 90px; flex: none; }
.sep-first { margin-right: 80px; }
.panelbtn {
  width: 160px;
  height: 42px;
  margin-right: 172px;
  border-radius: 10px;
  background: linear-gradient(270deg, #0058c9, #1a3a66);
  color: #fff;
  font-size: 12.500px;
  font-weight: 700;
  display: flex;
  align-items: center;
  justify-content: center;
  gap: 12px;
  white-space: nowrap;
}
.uicon { width: 12px; height: 15px; flex: none; }

/* hero */
.hero { display: flex; align-items: flex-start; }
.intro {
  width: 690px;
  flex: none;
  margin-right: 151px;
  text-align: center;
}
.t1 {
  margin: 21px 0 0;
  line-height: 40px;
  font-size: 24px;
  font-weight: 700;
  color: #0058c9;
}
.t2 {
  margin: 14px 0 0;
  line-height: 40px;
  font-size: 24px;
  font-weight: 700;
  color: #55585c;
}
.lead {
  margin: 32px 0 0;
  font-size: 16.500px;
  line-height: 29px;
  color: #6a6a6a;
}
.ln {
  display: block;
  white-space: nowrap;
  text-align: justify;
  text-align-last: justify;
  white-space: normal;
}
.ln-end { padding-left: 40px; }
.actions {
  margin-top: 50px;
  display: flex;
  justify-content: center;
  align-items: center;
  gap: 33px;
}
.btn {
  display: flex;
  align-items: center;
  justify-content: center;
  font-size: 16px;
  font-weight: 700;
  border-radius: 10px;
  white-space: nowrap;
}
.btn-fill {
  width: 185px;
  height: 48px;
  color: #fff;
  background: linear-gradient(270deg, #0058c9, #1a3a66);
}
.btn-dash {
  width: 207px;
  height: 50px;
  color: #0058c9;
  background: #fff;
  border: 2px dashed #0058c9;
}
.count {
  margin-top: 76px;
  line-height: 60px;
  font-size: 42px;
  font-weight: 700;
  letter-spacing: -1.500px;
  color: #0058c9;
}
.countlabel {
  margin-top: 32px;
  line-height: 30px;
  font-size: 21px;
  font-weight: 700;
  color: #0058c9;
}
.map {
  flex: none;
  width: 1000px;
  height: 811px;
  margin-right: auto;
  margin-left: 30px;
  display: block;
}
.land { fill: #7d7d7d; stroke: #fff; stroke-width: 1.500; stroke-linejoin: round; }
.isle { fill: #7d7d7d; stroke: #fff; }
.lines polyline { fill: none; stroke: #fff; stroke-width: 2; stroke-linejoin: round; stroke-linecap: round; }
.pins rect { fill: #0058c9; }
.pins text {
  fill: #fff;
  font-family: "DejaVu Sans", sans-serif;
  font-size: 13px;
  font-weight: 700;
  text-anchor: middle;
  direction: rtl;
}
.scrollthumb {
  position: absolute;
  top: 1px;
  right: 0;
  width: 8px;
  height: 228px;
  background: #0058c9;
  border-radius: 4px 4px 0 0;
}
.activate {
  position: absolute;
  left: 1598px;
  top: 876px;
  font-family: "Noto Sans", sans-serif;
  font-stretch: normal;
  color: #c4c4c4;
}
.act1 { font-size: 19px; line-height: 26px; }
.act2 { font-size: 14px; line-height: 20px; }

/* taskbar */
.taskbar {
  flex: none;
  height: 40px;
  display: flex;
  align-items: stretch;
  background: linear-gradient(90deg, #1f3841, #20384a 50%, #1b2a47);
  font-family: "Noto Sans", sans-serif;
  color: #fff;
}
.tb-start { width: 48px; display: flex; align-items: center; justify-content: center; }
.winlogo { width: 16px; height: 16px; }
.tb-search {
  width: 344px;
  background: #f0f0f0;
  border-top: 1px solid #c9c9c9;
  display: flex;
  align-items: center;
  padding-left: 13px;
}
.mag { width: 17px; height: 17px; flex: none; }
.tb-ph { font-size: 14px; color: #1d2b36; margin-left: 10px; flex: 1; font-family: "Liberation Sans", sans-serif; }
.doodle { width: 66px; height: 32px; margin-right: 6px; flex: none; }
.ti {
  width: 49px;
  flex: none;
  display: flex;
  align-items: center;
  justify-content: center;
  border-bottom: 2px solid transparent;
}
.ti-ic { width: 24px; height: 24px; }
.ti-on { border-image: linear-gradient(90deg, transparent 10%, #76b9ed 10%, #76b9ed 90%, transparent 90%) 1; }
.ti-plex {
  background: linear-gradient(90deg, transparent 5px, #6b6a33 5px, #6b6a33 38px, transparent 38px);
  border-image: linear-gradient(90deg, transparent 10%, #f5d327 10%, #f5d327 78%, transparent 78%) 1;
}
.ti-active { background: #46606c; border-bottom-color: #76b9ed; }
.pc { font-size: 9px; font-weight: 700; fill: #fff; font-family: "Liberation Sans", sans-serif; }
.tray { margin-left: auto; display: flex; align-items: center; padding-right: 16px; }
.wx { width: 22px; height: 24px; flex: none; }
.wx-t { font-size: 13px; margin-left: 8px; white-space: nowrap; }
.wx-h { font-family: "Liberation Sans", sans-serif; font-size: 14.500px; margin-left: 9px; white-space: nowrap; }
.tr-chev { width: 12px; height: 12px; margin-left: 15px; flex: none; }
.tr-ic { width: 16px; height: 16px; flex: none; margin-left: 8px; display: block; }
.tr-chev + .tr-ic { margin-left: 12px; }
.tr-lang { font-size: 11.500px; margin-left: 8px; white-space: nowrap; }
.clock {
  display: flex;
  flex-direction: column;
  align-items: center;
  width: 60px;
  margin-left: 10px;
  font-size: 11.500px;
  line-height: 18px;
}
.notif { position: relative; margin-left: 12px; width: 28px; }
.notif .tr-ic { margin-left: 4px; }
.nbadge {
  position: absolute;
  right: 2px;
  top: 8px;
  width: 15px;
  height: 17px;
  border-radius: 50%;
  background: #555;
  border: 1px solid #ccc;
  text-align: center;
  font-size: 10px;
  line-height: 15px;
  font-weight: 700;
}
```
